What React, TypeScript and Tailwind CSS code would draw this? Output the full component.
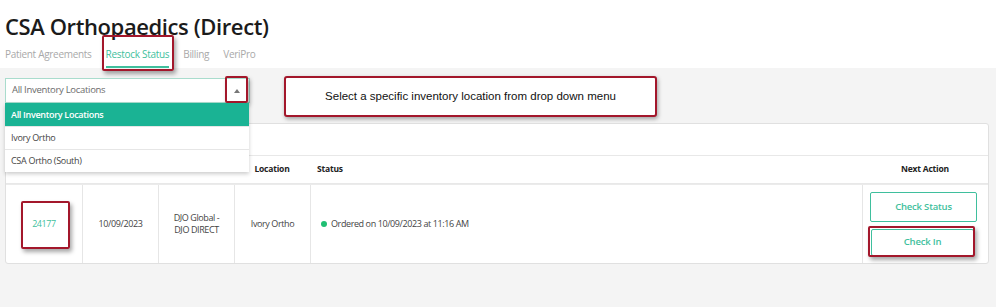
const tabs = ["Patient Agreements", "Restock Status", "Billing", "VeriPro"];
const locations = ["All Inventory Locations", "Ivory Ortho", "CSA Ortho (South)"];

// red annotation frame laid over highlighted content
const Mark = ({ className }: { className: string }) => (
  <span className={`pointer-events-none absolute rounded-[2px] border-[2.5px] border-[#a3172b] shadow-[2px_3px_4px_rgba(0,0,0,0.35)] ${className}`} />
);

export default function App() {
  return (
    <div className="min-h-[307px] bg-[#f4f4f4] font-['Open_Sans',sans-serif] text-[#333]">
      <header className="bg-white px-[5px] pt-[10px]">
        <h1 className="text-[22px] font-semibold leading-[32px] tracking-[-0.4px] text-[#1b1b1b]">CSA Orthopaedics (Direct)</h1>
        <nav className="mt-[5px] flex gap-[14px] text-[10px] tracking-[-0.3px]">
          {tabs.map((t) => (
            <div
              key={t}
              className={`relative pb-[4px] ${t === "Restock Status" ? "border-b-2 border-[#3fbf9d] text-[#3fbf9d]" : "border-b-2 border-transparent text-[#a9a9a9]"}`}
            >
              {t}
              {t === "Restock Status" ? <Mark className="-top-[12px] -left-[4px] -right-[5px] -bottom-[5px]" /> : null}
            </div>
          ))}
        </nav>
      </header>

      <main className="px-[5px] pt-[10px]">
        <div className="flex items-start gap-[34px]">
          <div className="relative z-10 w-[245px]">
            <div className="flex h-[25px] items-center justify-between border border-[#a9dccd] bg-white pl-[6px] pr-[6px] text-[9.5px] tracking-[-0.3px] text-[#6b6b6b]">
              <span>All Inventory Locations</span>
              <span className="relative flex h-full w-[12px] items-center justify-center">
                <span className="h-0 w-0 border-x-[3px] border-b-[4px] border-x-transparent border-b-[#777]" />
                <Mark className="-top-[3px] -left-[6px] -right-[5px] -bottom-[1px]" />
              </span>
            </div>
            <ul className="absolute left-0 top-[25px] w-[244px] bg-white text-[9px] tracking-[-0.3px] shadow-[0_2px_4px_rgba(0,0,0,0.2)]">
              {locations.map((l, i) => (
                <li
                  key={l}
                  className={`flex h-[23px] items-center px-[6px] ${i === 0 ? "bg-[#1ab394] font-semibold text-white" : "border-t border-[#e6e6e6] text-[#444]"}`}
                >
                  {l}
                </li>
              ))}
            </ul>
          </div>

          <div className="-mt-[2px] flex h-[41px] w-[373px] items-center justify-center rounded-[3px] border-2 border-[#a3172b] bg-white font-['Liberation_Sans',Arial,sans-serif] text-[11.5px] text-[#111] shadow-[1px_2px_4px_rgba(0,0,0,0.35)]">
            Select a specific inventory location from drop down menu
          </div>
        </div>

        <section className="mt-[6px] w-[984px] rounded-[3px] border border-[#e0e0e0] bg-white">
          <div className="h-[31px]" />
          <div className="grid h-[29px] grid-cols-[76px_76px_76px_76px_1fr_126px] items-center border-y border-[#e8e8e8] text-[8.5px] font-bold tracking-[-0.2px] text-[#222]">
            <span />
            <span />
            <span />
            <span className="text-center">Location</span>
            <span className="pl-[7px]">Status</span>
            <span className="text-center">Next Action</span>
          </div>
          <div className="grid h-[79px] grid-cols-[76px_76px_76px_76px_1fr_126px] border-t border-[#ebebeb] text-[9px] tracking-[-0.4px] text-[#444]">
            <div className="flex items-center justify-center">
              <span className="relative text-[#3fbf9d]">
                24177
                <Mark className="-top-[16px] -left-[11px] -right-[14px] -bottom-[18px]" />
              </span>
            </div>
            <div className="flex items-center justify-center border-l border-[#e6e6e6]">10/09/2023</div>
            <div className="flex items-center justify-center border-l border-[#e6e6e6] text-center leading-[12px]">
              DJO Global -<br />DJO DIRECT
            </div>
            <div className="flex items-center justify-center border-l border-[#e6e6e6]">Ivory Ortho</div>
            <div className="flex items-center gap-[4px] border-l border-[#e6e6e6] pl-[10px]">
              <span className="h-[6px] w-[6px] rounded-full bg-[#1fbf73]" />
              Ordered on 10/09/2023 at 11:16 AM
            </div>
            <div className="flex flex-col items-start gap-[7px] border-l border-[#e6e6e6] pl-[7px] pt-[7px]">
              <button className="h-[30px] w-[107px] rounded-[2px] border-[1.5px] border-[#3fbf9d] text-[9.5px] font-semibold tracking-[-0.2px] text-[#3fbf9d]">
                Check Status
              </button>
              <button className="relative ml-[1px] h-[27px] w-[103px] rounded-[2px] border-[1.5px] border-[#3fbf9d] text-[9.5px] font-semibold tracking-[-0.2px] text-[#3fbf9d]">
                Check In
                <Mark className="-top-[4px] -left-[4px] -right-[2px] -bottom-[2px]" />
              </button>
            </div>
          </div>
        </section>
      </main>
    </div>
  );
}
